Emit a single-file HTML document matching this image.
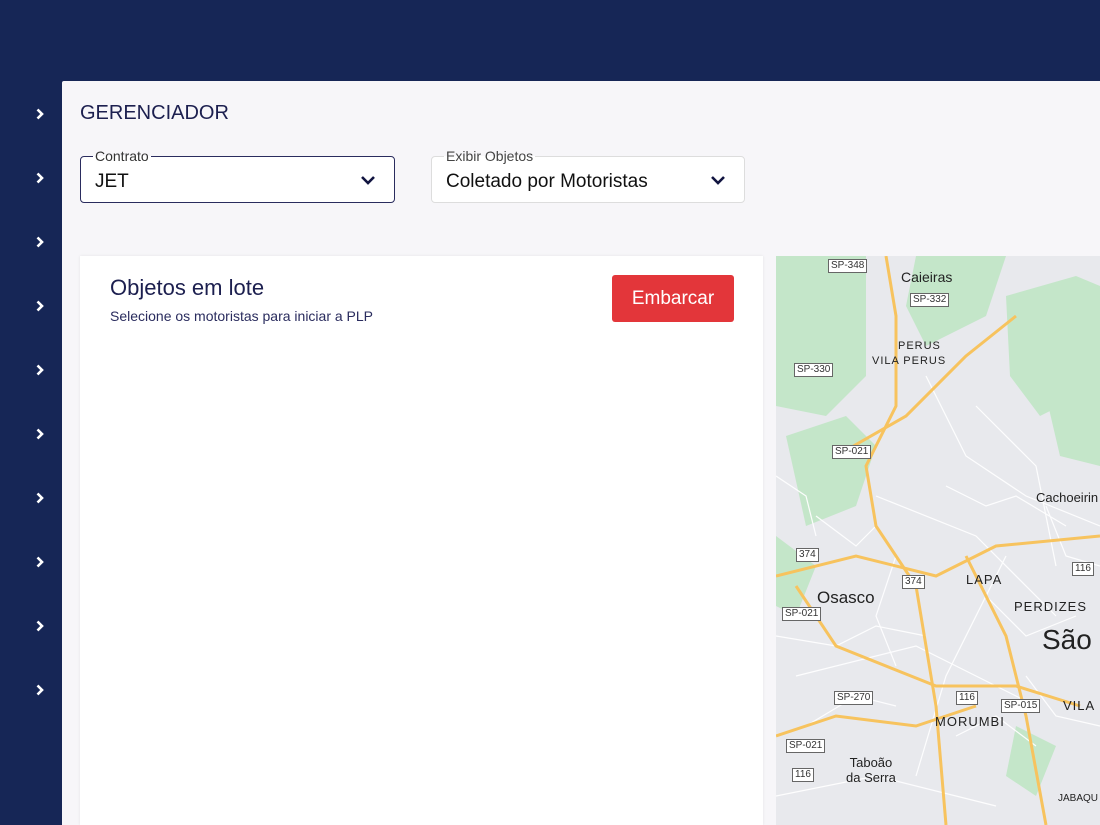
<!DOCTYPE html>
<html><head><meta charset="utf-8"><style>
*{margin:0;padding:0;box-sizing:border-box}
body{width:1100px;height:825px;overflow:hidden;background:#162656;font-family:"Liberation Sans",sans-serif;position:relative}
.main{position:absolute;left:62px;top:81px;width:1038px;height:744px;background:#f7f6f9;border-top-left-radius:2px}
.chev{position:absolute;left:33px;width:14px;height:14px}
.h{position:absolute;left:80px;top:102px;font-size:20px;color:#1c1f4f}
.sel{position:absolute;top:156px;height:47px;background:#fff;border-radius:4px}
.sel .lab{position:absolute;top:-9px;left:12px;background:linear-gradient(#f7f6f9 50%,#fff 50%);padding:0 2px;font-size:14px;color:#333}
.sel .val{position:absolute;left:14px;top:14px;font-size:19px;color:#111}
.sel svg{position:absolute;right:18px;top:17px}
.card{position:absolute;left:80px;top:256px;width:683px;height:569px;background:#fff;box-shadow:0 0 3px rgba(0,0,0,.08)}
.btn{position:absolute;left:612px;top:275px;width:122px;height:47px;background:#e3363a;border-radius:3px;color:#fff;font-size:19px;text-align:center;line-height:47px}
.map{position:absolute;left:776px;top:256px;width:324px;height:569px;background:#e8e9ed;overflow:hidden}
.map .t{position:absolute;font-size:14px;color:#222}
.map .s{position:absolute;font-size:10px;color:#333;border:1px solid #666;background:#fff;padding:0 2px;line-height:12px}
</style></head><body>
<div class="main"></div>
<svg class="chev" style="top:107px" viewBox="0 0 14 14"><path d="M4.5 2.5l4.5 4.5-4.5 4.5" stroke="#fff" stroke-width="2.6" fill="none"/></svg>
<svg class="chev" style="top:171px" viewBox="0 0 14 14"><path d="M4.5 2.5l4.5 4.5-4.5 4.5" stroke="#fff" stroke-width="2.6" fill="none"/></svg>
<svg class="chev" style="top:235px" viewBox="0 0 14 14"><path d="M4.5 2.5l4.5 4.5-4.5 4.5" stroke="#fff" stroke-width="2.6" fill="none"/></svg>
<svg class="chev" style="top:299px" viewBox="0 0 14 14"><path d="M4.5 2.5l4.5 4.5-4.5 4.5" stroke="#fff" stroke-width="2.6" fill="none"/></svg>
<svg class="chev" style="top:363px" viewBox="0 0 14 14"><path d="M4.5 2.5l4.5 4.5-4.5 4.5" stroke="#fff" stroke-width="2.6" fill="none"/></svg>
<svg class="chev" style="top:427px" viewBox="0 0 14 14"><path d="M4.5 2.5l4.5 4.5-4.5 4.5" stroke="#fff" stroke-width="2.6" fill="none"/></svg>
<svg class="chev" style="top:491px" viewBox="0 0 14 14"><path d="M4.5 2.5l4.5 4.5-4.5 4.5" stroke="#fff" stroke-width="2.6" fill="none"/></svg>
<svg class="chev" style="top:555px" viewBox="0 0 14 14"><path d="M4.5 2.5l4.5 4.5-4.5 4.5" stroke="#fff" stroke-width="2.6" fill="none"/></svg>
<svg class="chev" style="top:619px" viewBox="0 0 14 14"><path d="M4.5 2.5l4.5 4.5-4.5 4.5" stroke="#fff" stroke-width="2.6" fill="none"/></svg>
<svg class="chev" style="top:683px" viewBox="0 0 14 14"><path d="M4.5 2.5l4.5 4.5-4.5 4.5" stroke="#fff" stroke-width="2.6" fill="none"/></svg>
<div class="h">GERENCIADOR</div>
<div class="sel" style="left:80px;width:315px;border:1px solid #2a2c5e"><span class="lab">Contrato</span><span class="val">JET</span><svg width="16" height="12" viewBox="0 0 16 12"><path d="M2 3l6 6 6-6" stroke="#111440" stroke-width="2.6" fill="none"/></svg></div>
<div class="sel" style="left:431px;width:314px;border:1px solid #ddd"><span class="lab" style="color:#444">Exibir Objetos</span><span class="val">Coletado por Motoristas</span><svg width="16" height="12" viewBox="0 0 16 12"><path d="M2 3l6 6 6-6" stroke="#111440" stroke-width="2.6" fill="none"/></svg></div>
<div class="card"><div style="position:absolute;left:30px;top:19px;font-size:22px;color:#1c1f4f">Objetos em lote</div><div style="position:absolute;left:30px;top:52px;font-size:14px;color:#2a2c5e">Selecione os motoristas para iniciar a PLP</div></div>
<div class="btn">Embarcar</div>
<div class="map">
<svg width="324" height="569" style="position:absolute;left:0;top:0">
<path d="M0 0h90v120l-40 40-50-10z" fill="#c4e6c9"/>
<path d="M140 0h90l-20 60-60 30-20-40z" fill="#c4e6c9"/>
<path d="M230 40l70-20 24 10v100l-60 30-30-40z" fill="#c4e6c9"/>
<path d="M10 180l60-20 30 30-20 60-50 20z" fill="#c4e6c9"/>
<path d="M270 140l54-20v90l-40-10z" fill="#c4e6c9"/>
<path d="M0 280l40 30-20 50-20-10z" fill="#c4e6c9"/>
<path d="M240 470l40 20-20 50-30-20z" fill="#c4e6c9"/>
<g stroke="#fff" stroke-width="1.2" fill="none" opacity=".95">
<path d="M150 120l40 80 60 40 74 30"/><path d="M100 240l100 40 80 80"/><path d="M20 420l120-30 120 60"/><path d="M200 150l60 60 20 100"/><path d="M0 540l100-20 120 30"/><path d="M230 300l-60 120-30 100"/>
<path d="M0 380l60 10 40-20 50 10"/><path d="M30 470l50-30 40 10"/><path d="M170 230l40 20 30-10 50 30"/><path d="M210 340l40 40 50-20"/><path d="M120 300l-20 60 20 50"/><path d="M250 420l30 40 44 10"/><path d="M40 260l40 30 20-20"/><path d="M180 480l40-20 40 30"/><path d="M0 220l30 20 10 40"/><path d="M270 250l20 50 34 10"/>
</g>
<g stroke="#f7c35e" stroke-width="3" fill="none">
<path d="M110 0l10 60 0 90-30 60 10 60 40 60 20 120 10 119"/>
<path d="M0 320l80-20 80 20 60-30 104-10"/>
<path d="M20 330l40 60 100 40 80 0 64 20"/>
<path d="M60 200l70-40 60-60 50-40"/>
<path d="M190 300l40 80 20 80 20 109"/>
<path d="M0 480l60-20 80 10 60-20"/>
</g>
</svg>
<span class="s" style="left:52px;top:3px">SP-348</span>
<span class="t" style="left:125px;top:13px">Caieiras</span>
<span class="s" style="left:134px;top:37px">SP-332</span>
<span class="t" style="left:122px;top:84px;font-size:11px;letter-spacing:1px">PERUS</span>
<span class="t" style="left:96px;top:99px;font-size:11px;letter-spacing:1px">VILA PERUS</span>
<span class="s" style="left:18px;top:107px">SP-330</span>
<span class="s" style="left:56px;top:189px">SP-021</span>
<span class="t" style="left:260px;top:234px;font-size:13px">Cachoeirin</span>
<span class="s" style="left:20px;top:292px">374</span>
<span class="s" style="left:126px;top:319px">374</span>
<span class="t" style="left:190px;top:316px;font-size:13px;letter-spacing:1px">LAPA</span>
<span class="s" style="left:296px;top:306px">116</span>
<span class="t" style="left:41px;top:332px;font-size:17px">Osasco</span>
<span class="t" style="left:238px;top:343px;font-size:13px;letter-spacing:1px">PERDIZES</span>
<span class="s" style="left:6px;top:351px">SP-021</span>
<span class="t" style="left:266px;top:368px;font-size:28px">São</span>
<span class="s" style="left:58px;top:435px">SP-270</span>
<span class="s" style="left:180px;top:435px">116</span>
<span class="s" style="left:225px;top:443px">SP-015</span>
<span class="t" style="left:287px;top:442px;font-size:13px;letter-spacing:1px">VILA</span>
<span class="t" style="left:159px;top:458px;font-size:13px;letter-spacing:1px">MORUMBI</span>
<span class="s" style="left:10px;top:483px">SP-021</span>
<span class="t" style="left:70px;top:499px;font-size:13px;line-height:15px;text-align:center">Taboão<br>da Serra</span>
<span class="s" style="left:16px;top:512px">116</span>
<span class="t" style="left:282px;top:537px;font-size:10px">JABAQU</span>
</div>
</body></html>
